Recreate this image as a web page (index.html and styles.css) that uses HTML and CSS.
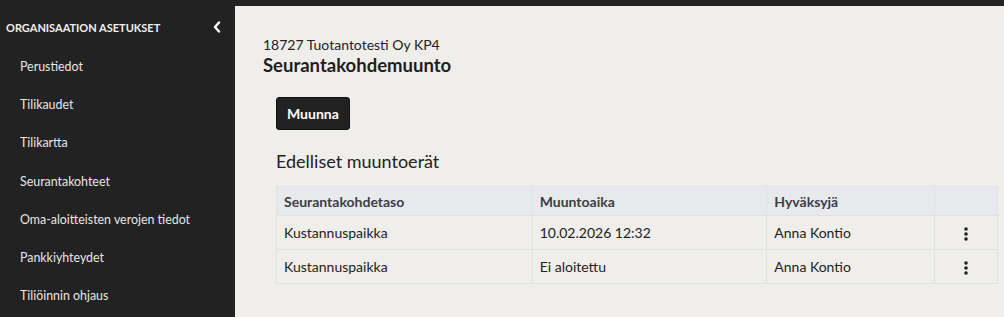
FILE: index.html
```
<!DOCTYPE html>
<html lang="fi">
<head>
<meta charset="utf-8">
<link rel="stylesheet" href="styles.css">
</head>
<body>
<div class="topbar"></div>
<div class="layout">
  <aside class="sidebar">
    <div class="side-head">
      <span>ORGANISAATION ASETUKSET</span>
      <svg class="chev" width="8" height="12" viewBox="0 0 8 12"><path d="M6 1.5 L2 6 L6 10.5" fill="none" stroke="#ffffff" stroke-width="2.4" stroke-linecap="round" stroke-linejoin="round"/></svg>
    </div>
    <nav class="side-nav">
      <a class="side-item">Perustiedot</a>
      <a class="side-item">Tilikaudet</a>
      <a class="side-item">Tilikartta</a>
      <a class="side-item">Seurantakohteet</a>
      <a class="side-item">Oma-aloitteisten verojen tiedot</a>
      <a class="side-item">Pankkiyhteydet</a>
      <a class="side-item">Tiliöinnin ohjaus</a>
    </nav>
  </aside>
  <main class="main">
    <div class="org">18727 Tuotantotesti Oy KP4</div>
    <h1 class="title">Seurantakohdemuunto</h1>
    <div class="content">
      <button class="btn">Muunna</button>
      <h2 class="subtitle">Edelliset muuntoerät</h2>
      <table class="tbl">
        <thead>
          <tr><th class="c1">Seurantakohdetaso</th><th class="c2">Muuntoaika</th><th class="c3">Hyväksyjä</th><th class="c4"></th></tr>
        </thead>
        <tbody>
          <tr><td>Kustannuspaikka</td><td>10.02.2026 12:32</td><td>Anna Kontio</td><td class="act"><svg width="4" height="14" viewBox="0 0 4 14"><circle cx="2" cy="2" r="1.8" fill="#222"/><circle cx="2" cy="7" r="1.8" fill="#222"/><circle cx="2" cy="12" r="1.8" fill="#222"/></svg></td></tr>
          <tr><td>Kustannuspaikka</td><td>Ei aloitettu</td><td>Anna Kontio</td><td class="act"><svg width="4" height="14" viewBox="0 0 4 14"><circle cx="2" cy="2" r="1.8" fill="#222"/><circle cx="2" cy="7" r="1.8" fill="#222"/><circle cx="2" cy="12" r="1.8" fill="#222"/></svg></td></tr>
        </tbody>
      </table>
    </div>
  </main>
</div>
</body>
</html>
```
FILE: styles.css
```
* { box-sizing: border-box; }
html, body { margin: 0; padding: 0; }
body {
  font-family: Lato, "Noto Sans", sans-serif;
  background: #efeeea;
  color: #222;
  width: 1004px;
  height: 317px;
  overflow: hidden;
}
.topbar { height: 6px; background: #222222; }
.layout { display: flex; height: 311px; }
.sidebar {
  width: 235px;
  flex: 0 0 235px;
  background: #222222;
  color: #e6e6e6;
}
.side-head {
  display: flex;
  align-items: center;
  justify-content: space-between;
  height: 42px;
  padding: 0 14px 0 6px;
  font-size: 11px;
  font-weight: 700;
  color: #f0f0f0;
}
.chev { display: block; }
.side-nav { display: flex; flex-direction: column; }
.side-item {
  display: block;
  height: 38.2px;
  line-height: 38px;
  padding-left: 20px;
  font-size: 12.4px;
  color: #e6e6e6;
}
.main { flex: 1; padding: 30px 0 0 28px; }
.org { font-size: 14px; color: #222; line-height: 18px; }
.title { margin: 0; font-size: 18.5px; font-weight: 700; line-height: 22px; color: #1e1e1e; }
.content { padding-left: 13px; padding-top: 21px; }
.btn {
  display: block;
  font-family: inherit;
  background: #222222;
  color: #fff;
  border: 1px solid #111;
  border-radius: 3px;
  font-size: 14px;
  font-weight: 700;
  height: 33px;
  padding: 0 10px;
}
.subtitle { margin: 19px 0 13px; font-size: 18px; font-weight: 400; line-height: 24px; color: #222; }
.tbl {
  border-collapse: collapse;
  width: 722px;
  font-size: 14px;
}
.tbl th, .tbl td {
  border: 1px solid #dfe1e4;
  text-align: left;
  padding: 0 7px;
}
.tbl th {
  background: #e7e9ec;
  font-weight: 700;
  color: #3c3e48;
  height: 29px;
}
.tbl td { height: 34px; color: #222; }
.c1 { width: 256px; }
.c2 { width: 235px; }
.c3 { width: 168px; }
.c4 { width: 63px; }
.act { text-align: center !important; }
.act svg { display: inline-block; vertical-align: middle; }
```
